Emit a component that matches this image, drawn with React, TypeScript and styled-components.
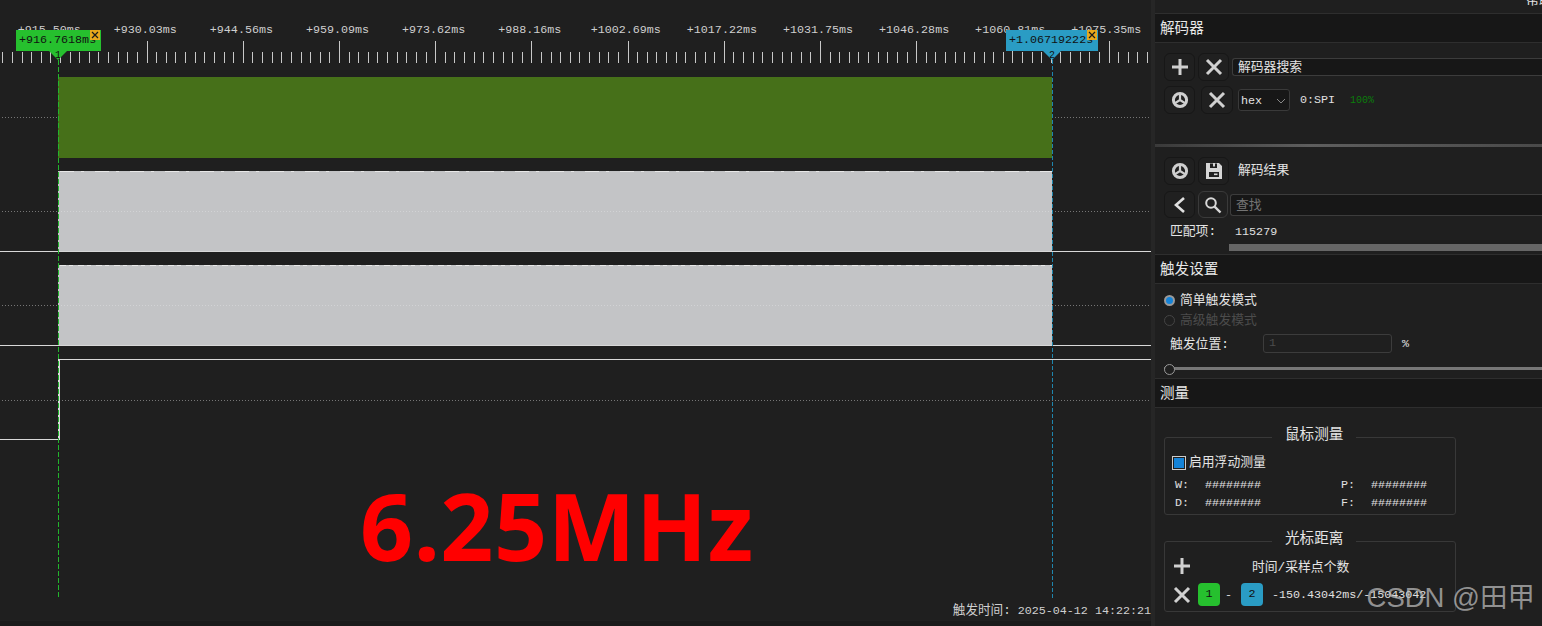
import React from 'react';
import styled, { createGlobalStyle } from 'styled-components';

const MONO = '"Liberation Mono", "Noto Sans CJK SC", monospace';
const CJK = '"Liberation Mono", "Noto Sans CJK SC", sans-serif';

const RULER_LABELS = [
  '+915.50ms', '+930.03ms', '+944.56ms', '+959.09ms', '+973.62ms', '+988.16ms',
  '+1002.69ms', '+1017.22ms', '+1031.75ms', '+1046.28ms', '+1060.81ms', '+1075.35ms',
];
const MAJOR_START = 49.2;
const MAJOR_STEP = 96.1;
const MINOR_STEP = 9.62;

const ticks: { x: number; major: boolean }[] = [];
for (let i = 0; i < 120; i++) {
  const x = 2.3 + i * MINOR_STEP;
  if (x < 1150) ticks.push({ x: Math.round(x) + 0.5, major: (i - 5) % 10 === 0 });
}

const Waveform = () => (
  <WaveSvg width={1151} height={626}>
    {ticks.map((t) => (
      <line key={t.x} x1={t.x} x2={t.x} y1={t.major ? 41 : 52} y2={63} stroke="#c8c8c8" />
    ))}
    {[117.5, 211.5, 305.5, 400.5].map((y) => (
      <line key={y} x1={2} x2={1151} y1={y} y2={y} stroke="#767676" strokeDasharray="1 2" />
    ))}
    <rect x={58} y={77} width={994} height={81} fill="#467019" />
    <rect x={58} y={171} width={994} height={80} fill="#c3c4c6" />
    <rect x={58} y={265} width={994} height={80} fill="#c3c4c6" />
    <line x1={58} x2={1052} y1={211.5} y2={211.5} stroke="#d2d3d5" strokeDasharray="1 2" />
    <line x1={58} x2={1052} y1={305.5} y2={305.5} stroke="#d2d3d5" strokeDasharray="1 2" />
    <line x1={60} x2={1052} y1={171.5} y2={171.5} stroke="#e8e8e8" strokeDasharray="14 7 3 11" />
    <line x1={60} x2={1052} y1={265.5} y2={265.5} stroke="#e8e8e8" strokeDasharray="6 3 4 5" />
    <path d="M0 251.5H1151M0 345.5H1151" stroke="#d8d8d8" fill="none" />
    <path d="M0 439.5H59M59 359.5H1151" stroke="#d8d8d8" fill="none" />
    <line x1={59} x2={59} y1={359} y2={440} stroke="#d8d8d8" strokeWidth={2} />
    <line x1={58.5} x2={58.5} y1={60} y2={598} stroke="#22b52c" strokeDasharray="5 2" />
    <line x1={1052.5} x2={1052.5} y1={60} y2={598} stroke="#1f86ad" strokeDasharray="4 2" />
  </WaveSvg>
);

type CursorProps = { id: string; label: string; color: string; left: number; width: number; tip: number };

const Cursor = ({ id, label, color, left, width, tip }: CursorProps) => (
  <CursorTag $color={color} $left={left} $width={width}>
    {label}
    <CloseBox>
      <svg width={10} height={10} viewBox="0 0 10 10">
        <path d="M2 2L8 8M8 2L2 8" stroke="#1a1a1a" strokeWidth={1.2} />
      </svg>
    </CloseBox>
    <CursorTip $color={color} $tip={tip}>{id}</CursorTip>
  </CursorTag>
);

const PlusIcon = () => (
  <svg width={20} height={20} viewBox="0 0 20 20">
    <path d="M10 2V18M2 10H18" stroke="#d0d0d0" strokeWidth={3} />
  </svg>
);

const CrossIcon = () => (
  <svg width={20} height={20} viewBox="0 0 20 20">
    <path d="M3 3L17 17M17 3L3 17" stroke="#d0d0d0" strokeWidth={3} />
  </svg>
);

const WheelIcon = () => (
  <svg width={18} height={18} viewBox="0 0 18 18">
    <circle cx={9} cy={9} r={6.6} fill="none" stroke="#cfcfcf" strokeWidth={3} />
    <path d="M9 9V3M9 9L3.6 12.4M9 9L14.4 12.4" stroke="#cfcfcf" strokeWidth={2.2} />
  </svg>
);

const SaveIcon = () => (
  <svg width={18} height={18} viewBox="0 0 18 18">
    <path fillRule="evenodd" fill="#d6d6d6" d="M1 1H14L17 4V17H1ZM5 1.5V6H12V1.5H10V4.5H8V1.5ZM4 10V15H14V10Z" />
    <rect x={9} y={11.5} width={3.5} height={1.6} fill="#d6d6d6" />
  </svg>
);

const BackIcon = () => (
  <svg width={18} height={20} viewBox="0 0 18 20">
    <path d="M13 3L5 10L13 17" fill="none" stroke="#e0e0e0" strokeWidth={2.6} />
  </svg>
);

const SearchIcon = () => (
  <svg width={18} height={18} viewBox="0 0 18 18">
    <circle cx={7} cy={7} r={4.8} fill="none" stroke="#d8d8d8" strokeWidth={2} />
    <path d="M10.6 10.6L16.5 16.5" stroke="#d8d8d8" strokeWidth={2.4} />
  </svg>
);

export default function App() {
  return (
    <>
      <GlobalStyle />
      <Window>
        <Canvas>
          <Waveform />
          {RULER_LABELS.map((text, i) => (
            <RulerLabel key={text} style={{ left: MAJOR_START + i * MAJOR_STEP }}>{text}</RulerLabel>
          ))}
          <Cursor id="1" label="+916.7618ms" color="#26c02e" left={16} width={85} tip={42} />
          <Cursor id="2" label="+1.06719222s" color="#2a9cc4" left={1006} width={92} tip={46} />
          <BigNote>6.25MHz</BigNote>
          <TriggerTime><TriggerCaption>触发时间:</TriggerCaption> 2025-04-12 14:22:21</TriggerTime>
          <BottomStrip />
        </Canvas>

        <Dock>
          <HelpMenu>帮助</HelpMenu>
          <TitleBar $height={30} $top={13}>解码器</TitleBar>

          <Section $height={101} $pad="10px 0 0 9px">
            <Row $gap={3}>
              <IconButton><PlusIcon /></IconButton>
              <IconButton><CrossIcon /></IconButton>
              <TextField $height={18} $left={0}>解码器搜索</TextField>
            </Row>
            <Row $gap={5} $top={5}>
              <IconButton $right={1}><WheelIcon /></IconButton>
              <IconButton $width={32}><CrossIcon /></IconButton>
              <SelectBox>
                hex
                <svg width={10} height={6} viewBox="0 0 10 6">
                  <path d="M1 1L5 5L9 1" fill="none" stroke="#888" />
                </svg>
              </SelectBox>
              <Mono $left={5}>0:SPI</Mono>
              <Percent>100%</Percent>
            </Row>
          </Section>
          <GroovedRule />

          <Section $height={104} $pad="10px 0 0 9px">
            <Row $gap={3}>
              <IconButton><WheelIcon /></IconButton>
              <IconButton><SaveIcon /></IconButton>
              <Label $left={6}>解码结果</Label>
            </Row>
            <Row $gap={3} $top={6}>
              <IconButton $height={27}><BackIcon /></IconButton>
              <IconButton $width={30} $height={27} $active><SearchIcon /></IconButton>
              <TextField $height={22} $left={-1} $muted>查找</TextField>
            </Row>
            <MatchRow>
              <Label>匹配项:</Label>
              <Mono>115279</Mono>
            </MatchRow>
          </Section>
          <ScrollThumb />

          <TitleBar $height={30} $top={3}>触发设置</TitleBar>
          <Section $height={91} $pad="6px 0 0 9px">
            <RadioRow>
              <Radio $on />
              <Label>简单触发模式</Label>
            </RadioRow>
            <RadioRow>
              <Radio />
              <Label $dim>高级触发模式</Label>
            </RadioRow>
            <PositionRow>
              <Label>触发位置:</Label>
              <PositionField>1</PositionField>
              <Mono>%</Mono>
            </PositionRow>
            <SliderTrack>
              <SliderKnob />
            </SliderTrack>
          </Section>

          <TitleBar $height={30} $top={3}>测量</TitleBar>
          <Section $height={219} $pad="29px 0 0 9px">
            <GroupBox $height={78}>
              <Legend>鼠标测量</Legend>
              <CheckRow>
                <CheckBox />
                <Label>启用浮动测量</Label>
              </CheckRow>
              <ReadoutGrid>
                <Mono>W:</Mono><Mono>########</Mono><Mono>P:</Mono><Mono>########</Mono>
                <Mono>D:</Mono><Mono>########</Mono><Mono>F:</Mono><Mono>########</Mono>
              </ReadoutGrid>
            </GroupBox>
            <GroupBox $height={71} $top={26}>
              <Legend>光标距离</Legend>
              <DistanceHead>
                <PlusIcon />
                <Label>时间/采样点个数</Label>
              </DistanceHead>
              <DistanceRow>
                <CrossIcon />
                <Badge $color="#26c02e" $left={6}>1</Badge>
                <Mono $left={5}>-</Mono>
                <Badge $color="#2a9cc4" $left={9}>2</Badge>
                <Mono $left={9}>-150.43042ms/-15043042</Mono>
              </DistanceRow>
            </GroupBox>
          </Section>
          <Watermark>CSDN @田甲</Watermark>
        </Dock>
      </Window>
    </>
  );
}

const GlobalStyle = createGlobalStyle`
  html, body {
    margin: 0;
    padding: 0;
    overflow: hidden;
    background: #1f1f1f;
  }
`;

const Window = styled.div`
  display: flex;
  width: 1542px;
  height: 626px;
  overflow: hidden;
  background: #1f1f1f;
  color: #e4e4e4;
  font-family: ${CJK};
`;

const Canvas = styled.div`
  position: relative;
  flex: 0 0 1151px;
  height: 626px;
  overflow: hidden;
  background: #1f1f1f;
`;

const WaveSvg = styled.svg`
  position: absolute;
  left: 0;
  top: 0;
`;

const RulerLabel = styled.span`
  position: absolute;
  top: 22px;
  transform: translateX(-50%);
  font-family: ${MONO};
  font-size: 11.7px;
  line-height: 16px;
  color: #cfcfcf;
  white-space: nowrap;
`;

const CursorTag = styled.div<{ $color: string; $left: number; $width: number }>`
  position: absolute;
  left: ${({ $left }) => $left}px;
  top: 30px;
  width: ${({ $width }) => $width}px;
  height: 21px;
  box-sizing: border-box;
  padding: 2px 0 0 3px;
  background: ${({ $color }) => $color};
  color: #111;
  font-family: ${MONO};
  font-size: 11.7px;
  line-height: 16px;
  white-space: nowrap;
`;

const CloseBox = styled.span`
  position: absolute;
  right: 1px;
  top: 0;
  display: flex;
  width: 10px;
  height: 10px;
  background: #e8a81c;
`;

const CursorTip = styled.span<{ $color: string; $tip: number }>`
  position: absolute;
  left: ${({ $tip }) => $tip - 9}px;
  top: 21px;
  width: 18px;
  height: 9px;
  background: ${({ $color }) => $color};
  clip-path: polygon(0 0, 100% 0, 50% 100%);
  color: #111;
  font-size: 10px;
  line-height: 9px;
  text-align: center;
`;

const BigNote = styled.div`
  position: absolute;
  left: 360px;
  top: 460px;
  font-family: "Noto Sans", sans-serif;
  font-weight: 700;
  font-size: 93px;
  letter-spacing: 0.5px;
  line-height: 130px;
  color: #ff0000;
  white-space: nowrap;
`;

const TriggerTime = styled.div`
  position: absolute;
  right: 0;
  top: 603px;
  font-family: ${MONO};
  font-size: 11.7px;
  line-height: 16px;
  color: #cfcfcf;
  white-space: nowrap;
`;

const TriggerCaption = styled.span`
  font-size: 12.6px;
`;

const BottomStrip = styled.div`
  position: absolute;
  left: 0;
  right: 0;
  bottom: 0;
  height: 5px;
  background: #1a1a1a;
`;

const Dock = styled.div`
  position: relative;
  flex: 1;
  display: flex;
  flex-direction: column;
  min-width: 0;
  height: 626px;
  border-left: 4px solid #262626;
  box-sizing: border-box;
`;

const HelpMenu = styled.span`
  position: absolute;
  left: 371px;
  top: -7px;
  font-size: 13px;
  line-height: 16px;
  color: #e4e4e4;
  white-space: nowrap;
`;

const TitleBar = styled.div<{ $height: number; $top: number }>`
  flex: none;
  height: ${({ $height }) => $height}px;
  margin-top: ${({ $top }) => $top}px;
  box-sizing: border-box;
  padding-left: 5px;
  background: #171717;
  border-top: 1px solid #2e2e2e;
  border-bottom: 1px solid #2e2e2e;
  font-size: 14.6px;
  line-height: 30px;
  color: #e8e8e8;
`;

const Section = styled.section<{ $height: number; $pad: string }>`
  flex: none;
  height: ${({ $height }) => $height}px;
  box-sizing: border-box;
  padding: ${({ $pad }) => $pad};
  overflow: hidden;
`;

const Row = styled.div<{ $gap: number; $top?: number }>`
  display: flex;
  align-items: center;
  gap: ${({ $gap }) => $gap}px;
  margin-top: ${({ $top }) => $top ?? 0}px;
`;

const IconButton = styled.button<{ $width?: number; $height?: number; $active?: boolean; $right?: number }>`
  display: flex;
  flex: none;
  align-items: center;
  justify-content: center;
  width: ${({ $width }) => $width ?? 31}px;
  height: ${({ $height }) => $height ?? 28}px;
  margin-right: ${({ $right }) => $right ?? 0}px;
  padding: 0;
  background: #202020;
  border: 1px solid ${({ $active }) => ($active ? '#3a3a3a' : '#171717')};
  border-radius: 6px;
`;

const TextField = styled.div<{ $height: number; $left: number; $muted?: boolean }>`
  flex: 1;
  height: ${({ $height }) => $height}px;
  margin-left: ${({ $left }) => $left}px;
  box-sizing: border-box;
  padding-left: 5px;
  background: #171717;
  border: 1px solid #3c3c3c;
  border-right: none;
  border-radius: 3px 0 0 3px;
  font-size: 12.8px;
  line-height: ${({ $height }) => $height}px;
  color: ${({ $muted }) => ($muted ? '#747474' : '#e4e4e4')};
`;

const SelectBox = styled.div`
  display: flex;
  align-items: center;
  justify-content: space-between;
  width: 52px;
  height: 22px;
  box-sizing: border-box;
  padding: 1px 3px 0 2px;
  background: #171717;
  border: 1px solid #3a3a3a;
  border-radius: 3px;
  font-family: ${MONO};
  font-size: 11.7px;
`;

const Mono = styled.span<{ $left?: number }>`
  margin-left: ${({ $left }) => $left ?? 0}px;
  font-family: ${MONO};
  font-size: 11.7px;
  line-height: 16px;
  color: #e0e0e0;
  white-space: nowrap;
`;

const Percent = styled.span`
  margin-left: 10px;
  font-family: ${MONO};
  font-size: 10px;
  color: #0b7d0b;
`;

const Label = styled.span<{ $left?: number; $dim?: boolean }>`
  margin-left: ${({ $left }) => $left ?? 0}px;
  font-size: 12.8px;
  line-height: 16px;
  color: ${({ $dim }) => ($dim ? '#4c4c4c' : '#e4e4e4')};
  white-space: nowrap;
`;

const GroovedRule = styled.div`
  flex: none;
  height: 3px;
  background: linear-gradient(90deg, #3a3a3a, #5e5e5e 40%, #4a4a4a);
`;

const MatchRow = styled.div`
  display: flex;
  gap: 19px;
  margin-top: 6px;
  padding-left: 6px;
`;

const ScrollThumb = styled.div`
  flex: none;
  height: 7px;
  margin: -7px 0 0 74px;
  background: #666;
`;

const RadioRow = styled.div`
  display: flex;
  align-items: center;
  gap: 5px;
  height: 20px;

  ${Label} {
    padding-top: 2px;
  }
`;

const Radio = styled.span<{ $on?: boolean }>`
  width: 11px;
  height: 11px;
  box-sizing: border-box;
  background: ${({ $on }) => ($on ? '#1483d8' : 'transparent')};
  border: ${({ $on }) => ($on ? '2px solid #9a9a9a' : '1px solid #444')};
  border-radius: 50%;
`;

const PositionRow = styled.div`
  display: flex;
  align-items: center;
  height: 19px;
  margin-top: 4px;
  padding-left: 6px;

  ${Label} {
    width: 93px;
    padding-top: 2px;
  }
`;

const PositionField = styled.div`
  width: 129px;
  height: 19px;
  box-sizing: border-box;
  margin-right: 10px;
  padding-left: 5px;
  border: 1px solid #3c3c3c;
  border-radius: 3px;
  font-family: ${MONO};
  font-size: 11.7px;
  line-height: 17px;
  color: #4c4c4c;
`;

const SliderTrack = styled.div`
  position: relative;
  height: 3px;
  margin-top: 14px;
  background: #777;
`;

const SliderKnob = styled.span`
  position: absolute;
  left: 0;
  top: -3px;
  width: 9px;
  height: 9px;
  background: #1f1f1f;
  border: 1px solid #999;
  border-radius: 50%;
`;

const GroupBox = styled.div<{ $height: number; $top?: number }>`
  position: relative;
  width: 292px;
  height: ${({ $height }) => $height}px;
  margin-top: ${({ $top }) => $top ?? 0}px;
  box-sizing: border-box;
  border: 1px solid #383838;
  border-radius: 3px;
`;

const Legend = styled.span`
  position: absolute;
  left: 107px;
  top: -12px;
  padding: 0 13px;
  background: #1f1f1f;
  font-size: 14.6px;
  line-height: 18px;
  color: #e4e4e4;
  white-space: nowrap;
`;

const CheckRow = styled.div`
  display: flex;
  align-items: center;
  gap: 3px;
  padding: 17px 0 0 7px;
`;

const CheckBox = styled.span`
  width: 14px;
  height: 14px;
  box-sizing: border-box;
  background: #1483d8;
  border: 1px solid #ccc;
  box-shadow: inset 0 0 0 1px #1f1f1f;
`;

const ReadoutGrid = styled.div`
  display: grid;
  grid-template-columns: 30px 136px 30px 80px;
  grid-auto-rows: 18px;
  align-items: center;
  margin-top: 5px;
  padding-left: 10px;
`;

const DistanceHead = styled.div`
  display: flex;
  align-items: center;
  gap: 60px;
  height: 20px;
  padding: 14px 0 0 7px;

  ${Label} {
    padding-top: 3px;
  }
`;

const DistanceRow = styled.div`
  display: flex;
  align-items: center;
  margin-top: 7px;
  padding-left: 7px;
`;

const Badge = styled.span<{ $color: string; $left: number }>`
  flex: none;
  width: 22px;
  height: 23px;
  margin-left: ${({ $left }) => $left}px;
  background: ${({ $color }) => $color};
  border-radius: 4px;
  font-family: ${MONO};
  font-size: 11.7px;
  line-height: 23px;
  text-align: center;
  color: #111;
`;

const Watermark = styled.div`
  position: absolute;
  right: 7px;
  top: 581px;
  font-family: "Liberation Sans", "Noto Sans CJK SC", sans-serif;
  font-size: 27.5px;
  line-height: 34px;
  color: rgba(190, 190, 190, 0.72);
  white-space: nowrap;
`;
